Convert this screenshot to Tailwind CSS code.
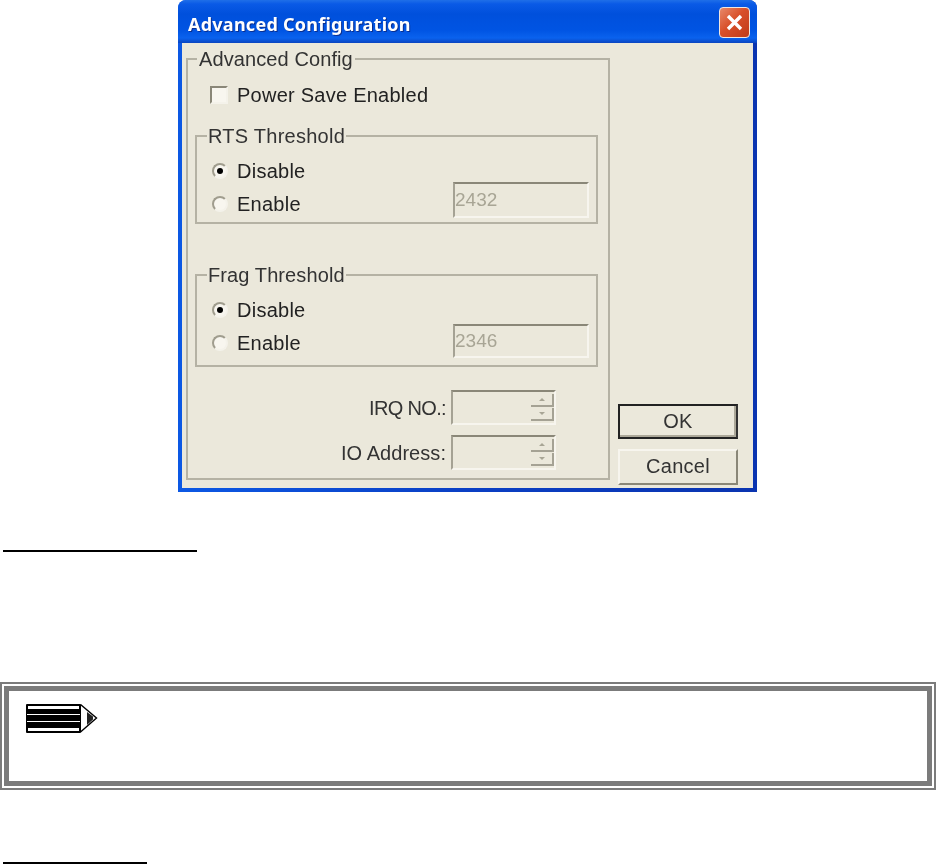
<!DOCTYPE html>
<html lang="en">

<head>
    <meta charset="UTF-8" />
    <meta name="viewport" content="width=device-width, initial-scale=1.0" />
    <script src="https://cdn.jsdelivr.net/npm/@tailwindcss/browser@4"></script>
    <title>Advanced Configuration</title>
</head>

<body class="bg-white w-[936px] h-[864px] overflow-hidden font-['Liberation_Sans',Arial,sans-serif]">
    <!-- dialog -->
    <div class="ml-[178px] w-[579px] h-[492px] flex flex-col rounded-t-[8px] overflow-hidden bg-[linear-gradient(90deg,#0c58e4,#0a3fc4_50%,#0a34b0)] blur-[0.4px]">
        <div class="h-[43px] shrink-0 flex items-start justify-between pt-[7px] pl-[10px] pr-[7px] bg-[linear-gradient(180deg,#1f6fe8_0px,#0a5ae6_4px,#0050dc_14px,#0054e3_30px,#0a62ee_38px,#0a45c0_43px)]">
            <span class="mt-[4px] text-white font-bold text-[18px] tracking-[0.25px] font-['Noto_Sans',sans-serif] [text-shadow:1px_1px_0_#0a2f90]">Advanced Configuration</span>
            <div class="w-[31px] h-[31px] rounded-[4px] border border-[#f0e6e0] bg-[linear-gradient(135deg,#e8896a,#d8502a_45%,#c03a18)] flex items-center justify-center">
                <svg width="21" height="21" viewBox="0 0 21 21" fill="none" stroke="#fff" stroke-width="3.4">
                    <path d="M4 4 17 17M17 4 4 17" />
                </svg>
            </div>
        </div>

        <div class="flex flex-1 mx-[4px] mb-[4px] bg-[#ebe8db] pl-[4px] pt-[5px] text-[20px] tracking-[0.25px] text-[#222]">
            <fieldset class="w-[424px] h-[432px] border-2 border-[#b5b2a4] pl-[7px] pr-[10px] shrink-0">
                <legend class="ml-[2px] px-[2px] h-[22px] leading-[22px] tracking-[0.1px] text-[#333]">Advanced Config</legend>

                <div class="mt-[15px] ml-[15px] h-[20px] flex items-center gap-[9px]">
                    <span class="w-[18px] h-[18px] bg-[#f8f6ef] border-2 border-[#8a8778] border-r-[#f4f2ea] border-b-[#f4f2ea]"></span>
                    <span>Power Save Enabled</span>
                </div>

                <fieldset class="mt-[20px] h-[99px] border-2 border-[#b5b2a4]">
                    <legend class="ml-[10px] px-[1px] h-[22px] leading-[22px] text-[#333]">RTS Threshold</legend>
                    <div class="flex justify-between items-end pl-[15px] pr-[7px]">
                        <div class="pt-[14px] pb-[4px] flex flex-col gap-[13px]">
                            <div class="h-[20px] flex items-center gap-[9px]">
                                <span class="w-[16px] h-[16px] rounded-full bg-[#f8f6ef] border-2 border-[#a09d8e] border-r-[#f4f2ea] border-b-[#f4f2ea] flex items-center justify-center"><span class="w-[6px] h-[6px] rounded-full bg-black"></span></span>
                                <span>Disable</span>
                            </div>
                            <div class="h-[20px] flex items-center gap-[9px]">
                                <span class="w-[16px] h-[16px] rounded-full bg-[#f8f6ef] border-2 border-[#a09d8e] border-r-[#f4f2ea] border-b-[#f4f2ea]"></span>
                                <span>Enable</span>
                            </div>
                        </div>
                        <div class="w-[136px] h-[36px] flex items-center border-2 border-[#8a8778] border-l-[#a5a294] border-r-[#f7f5ee] border-b-[#f7f5ee] text-[19px] tracking-normal text-[#a8a595]">2432</div>
                    </div>
                </fieldset>

                <fieldset class="mt-[40px] h-[103px] border-2 border-[#b5b2a4]">
                    <legend class="ml-[10px] px-[1px] h-[22px] leading-[22px] tracking-[0.1px] text-[#333]">Frag Threshold</legend>
                    <div class="flex justify-between items-end pl-[15px] pr-[7px]">
                        <div class="pt-[14px] pb-[5px] flex flex-col gap-[13px]">
                            <div class="h-[20px] flex items-center gap-[9px]">
                                <span class="w-[16px] h-[16px] rounded-full bg-[#f8f6ef] border-2 border-[#a09d8e] border-r-[#f4f2ea] border-b-[#f4f2ea] flex items-center justify-center"><span class="w-[6px] h-[6px] rounded-full bg-black"></span></span>
                                <span>Disable</span>
                            </div>
                            <div class="h-[20px] flex items-center gap-[9px]">
                                <span class="w-[16px] h-[16px] rounded-full bg-[#f8f6ef] border-2 border-[#a09d8e] border-r-[#f4f2ea] border-b-[#f4f2ea]"></span>
                                <span>Enable</span>
                            </div>
                        </div>
                        <div class="w-[136px] h-[34px] flex items-center border-2 border-[#8a8778] border-l-[#a5a294] border-r-[#f7f5ee] border-b-[#f7f5ee] text-[19px] tracking-normal text-[#a8a595]">2346</div>
                    </div>
                </fieldset>

                <div class="mt-[23px] flex flex-col gap-[10px] w-[361px]">
                    <div class="flex items-center justify-end gap-[5px]">
                        <span class="tracking-[-0.65px] text-[#333]">IRQ NO.:</span>
                        <div class="w-[105px] h-[35px] border-2 border-[#8a8778] border-l-[#a5a294] border-r-[#f7f5ee] border-b-[#f7f5ee] flex justify-end items-center">
                            <div class="w-[23px] flex flex-col gap-[1px]">
                                <span class="h-[13px] bg-[#ebe8db] border-r-2 border-b-2 border-[#a5a294] flex items-center justify-center"><span class="w-0 h-0 border-x-[3px] border-x-transparent border-b-[3px] border-b-[#a8a595]"></span></span>
                                <span class="h-[13px] bg-[#ebe8db] border-r-2 border-b-2 border-[#a5a294] flex items-center justify-center"><span class="w-0 h-0 border-x-[3px] border-x-transparent border-t-[3px] border-t-[#a8a595]"></span></span>
                            </div>
                        </div>
                    </div>
                    <div class="flex items-center justify-end gap-[5px]">
                        <span class="tracking-[0.05px] text-[#333]">IO Address:</span>
                        <div class="w-[105px] h-[35px] border-2 border-[#8a8778] border-l-[#a5a294] border-r-[#f7f5ee] border-b-[#f7f5ee] flex justify-end items-center">
                            <div class="w-[23px] flex flex-col gap-[1px]">
                                <span class="h-[13px] bg-[#ebe8db] border-r-2 border-b-2 border-[#a5a294] flex items-center justify-center"><span class="w-0 h-0 border-x-[3px] border-x-transparent border-b-[3px] border-b-[#a8a595]"></span></span>
                                <span class="h-[13px] bg-[#ebe8db] border-r-2 border-b-2 border-[#a5a294] flex items-center justify-center"><span class="w-0 h-0 border-x-[3px] border-x-transparent border-t-[3px] border-t-[#a8a595]"></span></span>
                            </div>
                        </div>
                    </div>
                </div>
            </fieldset>

            <div class="ml-[8px] w-[120px] flex flex-col justify-end gap-[10px] pb-[3px]">
                <button class="h-[35px] pb-[2px] border-2 border-[#222] border-r-[#333] border-b-[#222] bg-[#ebe8db] text-[#333] shadow-[inset_-2px_-2px_0_#aca899]">OK</button>
                <button class="h-[36px] pb-[2px] border-2 border-[#f7f5ee] border-r-[#8a8778] border-b-[#8a8778] bg-[#ebe8db] text-[#333]">Cancel</button>
            </div>
        </div>
    </div>

    <div class="mt-[58px] ml-[3px] w-[194px] h-[2px] bg-black"></div>

    <!-- note box -->
    <div class="mt-[130px] h-[108px] border-2 border-[#7b7b7b]">
        <div class="h-full border-2 border-white">
            <div class="h-full border-[5px] border-[#7b7b7b] pl-[17px] pt-[13px]">
                <svg width="72" height="29" viewBox="0 0 72 29" class="block">
                    <path d="M54.5.5 70.5 14 54.5 28" fill="#fff" stroke="#000" stroke-width="1.4" />
                    <path d="M61 8 67 12.5V15.5L61 21Z" fill="#222" />
                    <rect x="0" y="0" width="55" height="29" rx="1" fill="#000" />
                    <rect x="2" y="2" width="51" height="3" fill="#fff" />
                    <rect x="1" y="10" width="53" height="1" fill="#fff" />
                    <rect x="1" y="17" width="53" height="1" fill="#fff" />
                    <rect x="2" y="24" width="51" height="3" fill="#fff" />
                </svg>
            </div>
        </div>
    </div>

    <div class="mt-[72px] ml-[3px] w-[144px] h-[2px] bg-black"></div>
</body>

</html>
